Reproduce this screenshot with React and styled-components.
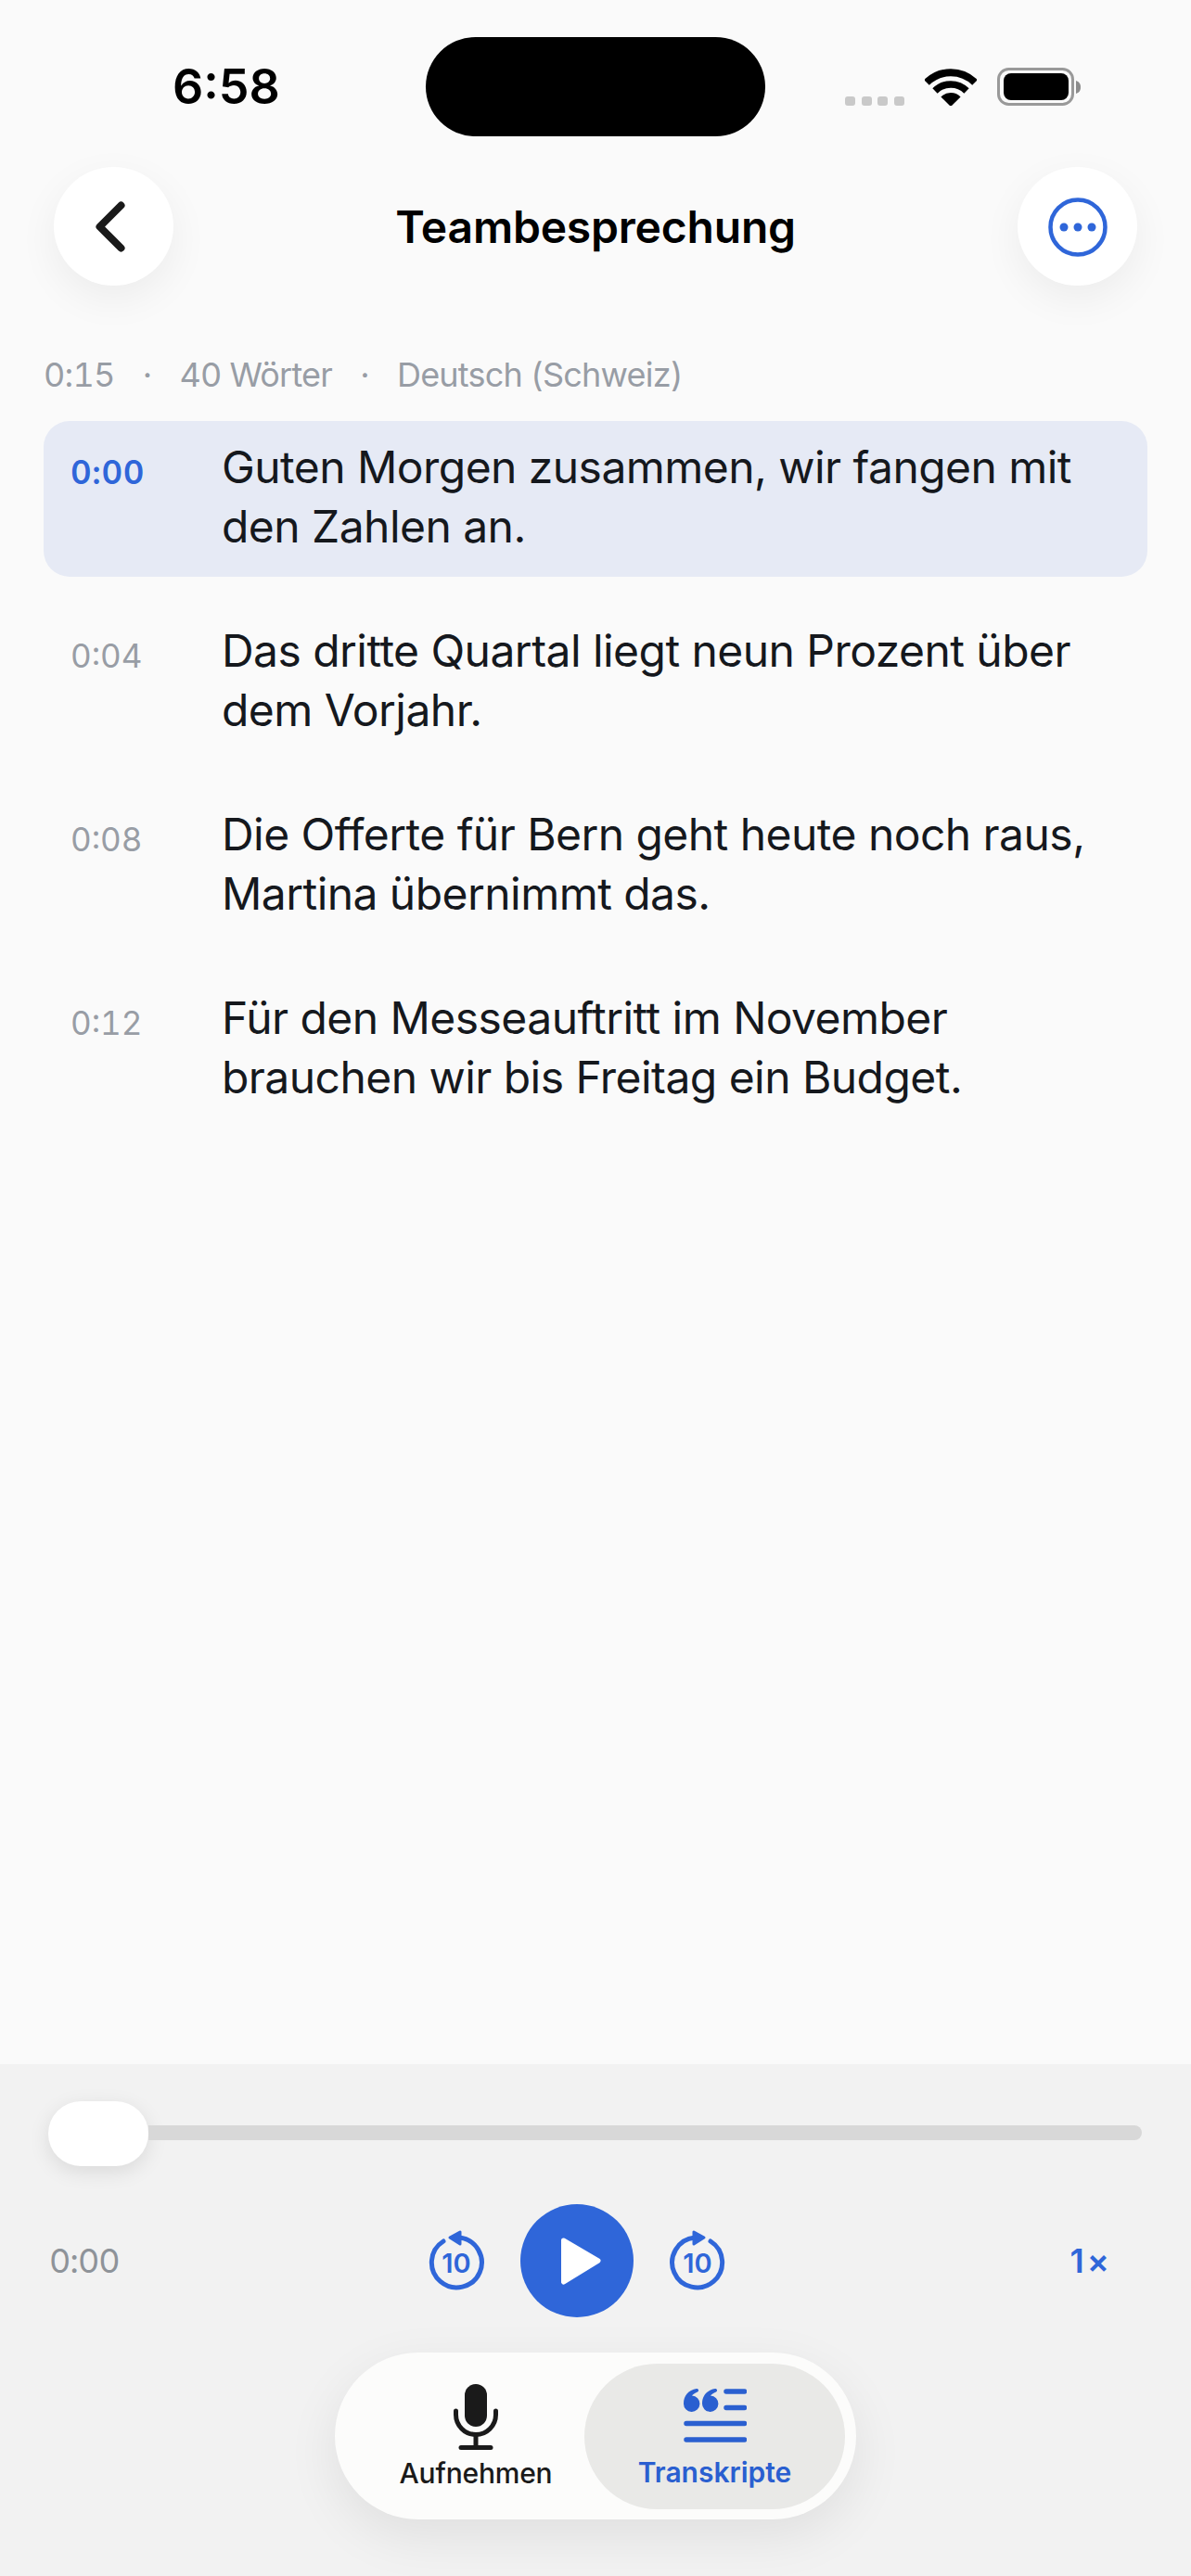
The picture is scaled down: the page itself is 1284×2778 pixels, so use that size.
import React from "react";
import styled, { createGlobalStyle } from "styled-components";

const Global = createGlobalStyle`
  html, body { margin: 0; padding: 0; background: #fafafa; }
  body { font-family: Inter, "Noto Sans", sans-serif; }
  * { box-sizing: border-box; }
`;

const Page = styled.div`
  width: 1284px;
  height: 2778px;
  display: flex;
  flex-direction: column;
  background: #fafafa;
  overflow: hidden;
`;

const StatusBar = styled.div`
  display: grid;
  grid-template-columns: 459px 366px 1fr;
  height: 180px;
  padding-top: 40px;
`;

const Clock = styled.div`
  height: 107px;
  padding: 29px 0 0 186px;
  font-size: 52px;
  line-height: 50px;
  font-weight: 600;
  color: #000;
`;

const Island = styled.div`
  height: 107px;
  border-radius: 54px;
  background: #000;
`;

const StatusIcons = styled.div`
  display: flex;
  align-items: flex-end;
  height: 74px;
  padding-left: 86px;
`;

const SignalDots = styled.div`
  display: flex;
  gap: 6.5px;
  margin-right: 22px;
`;

const SignalDot = styled.span`
  width: 11px;
  height: 10px;
  border-radius: 3px;
  background: #c9c9c9;
`;

const WifiIcon = styled.svg`
  display: block;
  width: 56px;
  height: 40px;
  margin-right: 22px;
`;

const BatteryIcon = styled.svg`
  display: block;
  width: 92px;
  height: 42px;
  margin-bottom: -1px;
`;

const Header = styled.header`
  display: flex;
  align-items: center;
  justify-content: space-between;
  height: 128px;
  padding: 0 58px;
`;

const RoundButton = styled.button`
  width: 129px;
  height: 128px;
  padding: 0;
  border: 0;
  border-radius: 50%;
  background: #fff;
  box-shadow: 0 14px 44px rgba(0, 0, 0, 0.06);
  display: flex;
  align-items: center;
  justify-content: center;
`;

const MoreGlyph = styled.svg`
  display: block;
  width: 66px;
  height: 66px;
  margin-top: 2px;
`;

const Title = styled.h1`
  margin: 2px 0 0;
  font-size: 48px;
  line-height: 60px;
  font-weight: 600;
  letter-spacing: -0.2px;
  color: #000;
`;

const Meta = styled.div`
  display: flex;
  margin-top: 74px;
  padding-left: 47px;
  height: 44px;
  font-size: 36px;
  line-height: 44px;
  letter-spacing: -0.8px;
  font-variant-numeric: tabular-nums;
  color: #989da5;
`;

const MetaDot = styled.span`
  width: 70px;
  text-align: center;
`;

const List = styled.div`
  display: flex;
  flex-direction: column;
  gap: 30px;
  margin: 28px 47px 0;
  flex: 1;
`;

const Row = styled.div`
  display: grid;
  grid-template-columns: 192px 1fr;
  height: 168px;
  padding: 18px 29px 0 0;
  border-radius: 28px;
  background: ${(p) => (p.$active ? "#e6eaf5" : "transparent")};
`;

const Stamp = styled.div`
  padding: 15px 0 0 29px;
  font-size: 35px;
  line-height: 44px;
  font-variant-numeric: tabular-nums;
  font-weight: ${(p) => (p.$active ? 600 : 400)};
  letter-spacing: ${(p) => (p.$active ? "0.7px" : "0")};
  color: ${(p) => (p.$active ? "#2f66d9" : "#989da5")};
`;

const Sentence = styled.div`
  font-size: 48px;
  line-height: 64px;
  letter-spacing: -0.55px;
  color: #15181d;
`;

const Player = styled.section`
  height: 552px;
  background: #f2f2f2;
  display: flex;
  flex-direction: column;
`;

const Slider = styled.div`
  display: flex;
  align-items: center;
  height: 70px;
  margin-top: 40px;
  padding: 0 53px 0 52px;
`;

const Thumb = styled.div`
  width: 108px;
  height: 70px;
  border-radius: 35px;
  background: #fff;
  box-shadow: 0 6px 22px rgba(0, 0, 0, 0.1);
`;

const Track = styled.div`
  flex: 1;
  height: 16px;
  margin-top: -2px;
  border-radius: 0 8px 8px 0;
  background: #d8d8d8;
`;

const Controls = styled.div`
  display: flex;
  align-items: center;
  height: 122px;
  margin-top: 41px;
  padding: 0 85px 0 53px;
`;

const Elapsed = styled.div`
  width: 410px;
  font-size: 36px;
  line-height: 44px;
  letter-spacing: -1px;
  font-variant-numeric: tabular-nums;
  color: #8e9399;
`;

const Transport = styled.div`
  display: flex;
  align-items: center;
  width: 318px;
  justify-content: space-between;
`;

const SkipIcon = styled.svg`
  display: block;
  width: 66px;
  height: 70px;
  margin: 0 -4px;
`;

const SkipText = styled.text`
  font-family: Inter, sans-serif;
  font-size: 29px;
  font-weight: 600;
  fill: #2f66d9;
  text-anchor: middle;
`;

const PlayButton = styled.button`
  width: 122px;
  height: 122px;
  padding: 0;
  border: 0;
  border-radius: 50%;
  background: #2f66d9;
  display: flex;
  align-items: center;
  justify-content: center;
`;

const PlayGlyph = styled.svg`
  display: block;
  width: 60px;
  height: 60px;
  margin-left: 6px;
`;

const Speed = styled.div`
  margin-left: auto;
  font-size: 36px;
  line-height: 44px;
  font-weight: 600;
  letter-spacing: 3px;
  color: #2f66d9;
`;

const TabBar = styled.nav`
  align-self: center;
  display: flex;
  align-items: center;
  width: 562px;
  height: 180px;
  margin-top: 38px;
  padding: 0 12px;
  border-radius: 90px;
  background: #fcfcfb;
  box-shadow: 0 18px 56px rgba(0, 0, 0, 0.08);
`;

const Tab = styled.div`
  flex: ${(p) => (p.$active ? "0 0 281px" : "1")};
  height: 157px;
  border-radius: 79px;
  display: flex;
  flex-direction: column;
  align-items: center;
  padding: ${(p) => (p.$active ? "27px 0 0" : "19px 0 0 23px")};
  background: ${(p) => (p.$active ? "#e9e9e7" : "transparent")};
`;

const TabIconSlot = styled.svg`
  display: block;
  flex: none;
`;

const TabLabel = styled.span`
  margin-top: ${(p) => (p.$active ? "13px" : "4px")};
  font-size: 30px;
  line-height: 38px;
  font-weight: ${(p) => (p.$active ? 600 : 500)};
  letter-spacing: ${(p) => (p.$active ? "0" : "-0.2px")};
  color: ${(p) => (p.$active ? "#2a5fd0" : "#1a1a1a")};
`;

const BackGlyph = styled.svg`
  display: block;
  width: 40px;
  height: 60px;
`;

const BLUE = "#2f66d9";

const rows = [
  ["0:00", "Guten Morgen zusammen, wir fangen mit den Zahlen an."],
  ["0:04", "Das dritte Quartal liegt neun Prozent über dem Vorjahr."],
  ["0:08", "Die Offerte für Bern geht heute noch raus, Martina übernimmt das."],
  ["0:12", "Für den Messeauftritt im November brauchen wir bis Freitag ein Budget."],
];

const Skip = ({ forward }) => (
  <SkipIcon viewBox="0 0 66 70">
    <g transform={forward ? "translate(66 0) scale(-1 1)" : undefined}>
      <path d="M19 14 A27 27 0 1 0 36 10" fill="none" stroke={BLUE} strokeWidth="5" strokeLinecap="round" />
      <path d="M26 10 L37 4 L37 17 Z" fill={BLUE} stroke={BLUE} strokeWidth="3" strokeLinejoin="round" />
    </g>
    <SkipText x="33" y="48">10</SkipText>
  </SkipIcon>
);

export default function App() {
  return (
    <Page>
      <Global />
      <StatusBar>
        <Clock>6:58</Clock>
        <Island />
        <StatusIcons>
          <SignalDots>
            <SignalDot /><SignalDot /><SignalDot /><SignalDot />
          </SignalDots>
          <WifiIcon viewBox="0 0 56 40">
            <path d="M2 15 A37 37 0 0 1 54 15" fill="none" stroke="#000" strokeWidth="8" />
            <path d="M11 24 A24 24 0 0 1 45 24" fill="none" stroke="#000" strokeWidth="7.5" />
            <path d="M28 41 L17.4 30.4 A15 15 0 0 1 38.6 30.4 Z" fill="#000" />
          </WifiIcon>
          <BatteryIcon viewBox="0 0 92 42">
            <rect x="1.5" y="1.5" width="80" height="38" rx="11" fill="none" stroke="#999" strokeWidth="3" />
            <rect x="7" y="6" width="70" height="29" rx="8" fill="#000" />
            <path d="M85 14 C88 15 90 17 90 21 C90 25 88 27 85 28 Z" fill="#8c8c8c" />
          </BatteryIcon>
        </StatusIcons>
      </StatusBar>

      <Header>
        <RoundButton aria-label="Zurück">
          <BackGlyph viewBox="0 0 40 60">
            <path d="M27.5 7.5 L4.5 30.5 L27.5 53.5" fill="none" stroke="#1a1a1a" strokeWidth="8" strokeLinecap="round" strokeLinejoin="round" />
          </BackGlyph>
        </RoundButton>
        <Title>Teambesprechung</Title>
        <RoundButton aria-label="Mehr">
          <MoreGlyph viewBox="0 0 66 66">
            <circle cx="33" cy="33" r="29.5" fill="none" stroke={BLUE} strokeWidth="4.5" />
            <circle cx="18" cy="33" r="4.5" fill={BLUE} />
            <circle cx="33" cy="33" r="4.5" fill={BLUE} />
            <circle cx="48" cy="33" r="4.5" fill={BLUE} />
          </MoreGlyph>
        </RoundButton>
      </Header>

      <Meta>
        <span>0:15</span>
        <MetaDot>·</MetaDot>
        <span>40 Wörter</span>
        <MetaDot>·</MetaDot>
        <span>Deutsch (Schweiz)</span>
      </Meta>

      <List>
        {rows.map(([t, s], i) => (
          <Row key={t} $active={i === 0}>
            <Stamp $active={i === 0}>{t}</Stamp>
            <Sentence>{s}</Sentence>
          </Row>
        ))}
      </List>

      <Player>
        <Slider>
          <Thumb />
          <Track />
        </Slider>
        <Controls>
          <Elapsed>0:00</Elapsed>
          <Transport>
            <Skip />
            <PlayButton aria-label="Abspielen">
              <PlayGlyph viewBox="0 0 60 60">
                <path d="M12.5 8 L50 30 L12.5 53 Z" fill="#fff" stroke="#fff" strokeWidth="5" strokeLinejoin="round" />
              </PlayGlyph>
            </PlayButton>
            <Skip forward />
          </Transport>
          <Speed>1×</Speed>
        </Controls>
        <TabBar>
          <Tab>
            <TabIconSlot width="54" height="76" viewBox="0 0 54 76">
              <rect x="15" y="3" width="24" height="46" rx="12" fill="#1a1a1a" />
              <path d="M5.5 32 V36 A21.5 21.5 0 0 0 48.5 36 V32" fill="none" stroke="#1a1a1a" strokeWidth="5" strokeLinecap="round" />
              <path d="M27 58 V70" stroke="#1a1a1a" strokeWidth="5" />
              <path d="M11 71.5 H43" stroke="#1a1a1a" strokeWidth="5" strokeLinecap="round" />
            </TabIconSlot>
            <TabLabel>Aufnehmen</TabLabel>
          </Tab>
          <Tab $active>
            <TabIconSlot width="68" height="58" viewBox="0 0 68 58">
              <path d="M0 16 C0 8 5 1.5 14 0 C16 -0.3 17 2.5 15 3.5 C12 5 10 6 9 7.5 A8.7 8.7 0 1 1 0 16 Z" fill="#2a5fd0" />
              <path d="M20 16 C20 8 25 1.5 34 0 C36 -0.3 37 2.5 35 3.5 C32 5 30 6 29 7.5 A8.7 8.7 0 1 1 20 16 Z" fill="#2a5fd0" />
              <path d="M46 3 H65.5 M46 20.5 H65.5 M3 37.5 H65.5 M3 55 H65.5" stroke="#2a5fd0" strokeWidth="5.5" strokeLinecap="round" />
            </TabIconSlot>
            <TabLabel $active>Transkripte</TabLabel>
          </Tab>
        </TabBar>
      </Player>
    </Page>
  );
}
